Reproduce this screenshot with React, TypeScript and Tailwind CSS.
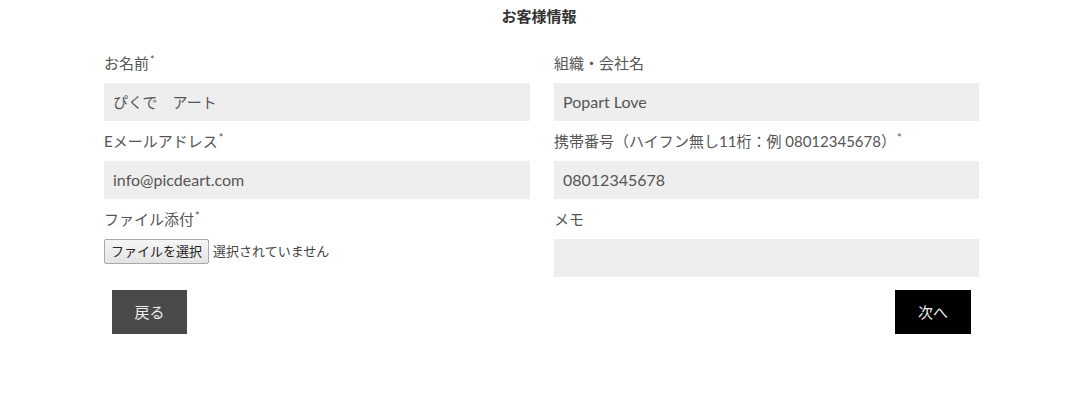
import React from 'react';

const font = { fontFamily: '"Lato", "Noto Sans CJK JP", sans-serif' };

const Req = () => <span className="relative -top-[3px] ml-[1px] text-[11px]">*</span>;

const Label = ({ children }: { children: React.ReactNode }) => (
  <div className="flex h-10 items-center text-[15px] text-[#555]">{children}</div>
);

const Field = ({ value, latin = false }: { value?: string; latin?: boolean }) => (
  <div
    className={`flex h-[38px] items-center bg-[#eeeeee] px-[9px] text-[#555] ${
      latin ? 'text-[16px]' : 'text-[15px]'
    }`}
  >
    {value}
  </div>
);

export default function App() {
  return (
    <div className="min-h-[405px] w-[1078px] bg-white" style={font}>
      <div className="flex h-8 items-center justify-center text-[15px] font-bold text-[#333]">
        お客様情報
      </div>

      <div className="ml-[104px] mt-[11px] w-[875px]">
        <div className="grid grid-cols-[426px_425px] gap-x-6">
          <div>
            <Label>
              お名前
              <Req />
            </Label>
            <Field value="ぴくで　アート" />
            <Label>
              Eメールアドレス
              <Req />
            </Label>
            <Field value="info@picdeart.com" latin />
            <Label>
              ファイル添付
              <Req />
            </Label>
            <div className="flex items-center gap-1 text-[13px] text-[#444]">
              <button className="h-[25px] rounded-[2px] border border-[#a9a9a9] bg-gradient-to-b from-[#f6f6f6] to-[#e3e3e3] px-[6px] text-[13px] text-[#222]">
                ファイルを選択
              </button>
              <span>選択されていません</span>
            </div>
          </div>

          <div>
            <Label>組織・会社名</Label>
            <Field value="Popart Love" latin />
            <Label>
              携帯番号（ハイフン無し11桁：例 08012345678）
              <Req />
            </Label>
            <Field value="08012345678" latin />
            <Label>メモ</Label>
            <Field />
          </div>
        </div>

        <div className="mt-[13px] flex justify-between px-2">
          <button className="h-11 w-[75px] bg-[#4a4a4a] text-[15px] text-[#eeeeee]">戻る</button>
          <button className="h-11 w-[76px] bg-black text-[15px] text-[#eeeeee]">次へ</button>
        </div>
      </div>
    </div>
  );
}
